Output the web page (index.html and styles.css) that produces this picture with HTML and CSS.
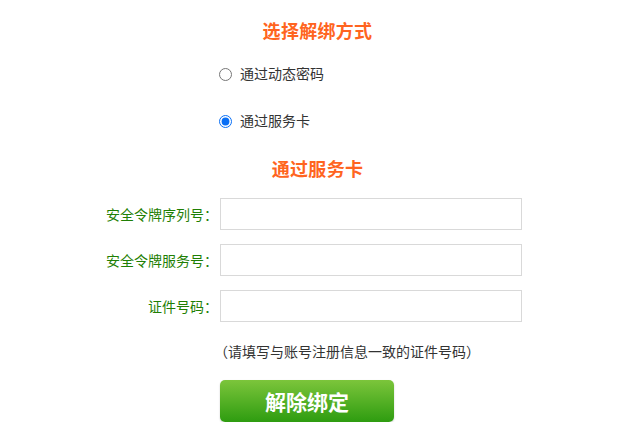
FILE: index.html
```
<!DOCTYPE html>
<html lang="zh-CN">
<head>
    <meta charset="UTF-8">
    <title>选择解绑方式</title>
    <link rel="stylesheet" href="styles.css">
</head>
<body>
<div class="unbind">
    <h2 class="title">选择解绑方式</h2>
    <ul class="options">
        <li><label><input type="radio" name="way"> 通过动态密码</label></li>
        <li><label><input type="radio" name="way" checked> 通过服务卡</label></li>
    </ul>

    <h2 class="title sub">通过服务卡</h2>
    <div class="form">
        <div class="row">
            <span class="label">安全令牌序列号：</span>
            <input class="field" type="text">
        </div>
        <div class="row">
            <span class="label">安全令牌服务号：</span>
            <input class="field" type="text">
        </div>
        <div class="row">
            <span class="label">证件号码：</span>
            <input class="field" type="text">
        </div>
    </div>
    <p class="note">（请填写与账号注册信息一致的证件号码）</p>
    <div class="actions">
        <button class="submit" type="button">解除绑定</button>
    </div>
</div>
</body>
</html>
```

FILE: styles.css
```
body {
    margin: 0;
    background: #fff;
    font-family: "Liberation Sans", "Noto Sans CJK SC", sans-serif;
    font-size: 14px;
    color: #333;
}

.unbind {
    width: 627px;
}

.title {
    margin: 18px 0 0 8px;
    font-size: 18px;
    line-height: 24px;
    font-weight: bold;
    color: #ff6420;
    text-align: center;
    font-family: "Noto Sans CJK SC", serif;
    letter-spacing: 0.3px;
}

.title.sub {
    margin-top: 23px;
}

.options {
    list-style: none;
    margin: 20px 0 0;
    padding: 0 0 0 219px;
}

.options li {
    height: 24px;
    line-height: 24px;
    margin-bottom: 23px;
}

.options li:last-child {
    margin-bottom: 0;
}

.options label {
    display: flex;
    align-items: center;
    gap: 8px;
}

.options input {
    margin: 0;
    width: 13px;
    height: 13px;
    accent-color: #0a6ff5;
}

.form {
    margin-top: 18px;
}

.row {
    display: grid;
    grid-template-columns: 218px 302px;
    column-gap: 2px;
    align-items: center;
    margin-bottom: 14px;
}

.row:last-child {
    margin-bottom: 0;
}

.label {
    text-align: right;
    color: #1f7f05;
}

.field {
    box-sizing: border-box;
    width: 302px;
    height: 32px;
    margin: 0;
    border: 1px solid #d9d9d9;
    outline: none;
}

.note {
    margin: 18px 0 0 214px;
    line-height: 24px;
}

.actions {
    margin: 16px 0 0 220px;
}

.submit {
    width: 174px;
    height: 42px;
    border: none;
    border-radius: 5px;
    background: linear-gradient(#7cc53b, #2e9c10);
    box-shadow: 0 1px 2px rgba(0, 0, 0, 0.2);
    color: #fff;
    font-family: "Noto Sans CJK SC", serif;
    font-size: 21px;
    font-weight: bold;
    cursor: pointer;
}
```
